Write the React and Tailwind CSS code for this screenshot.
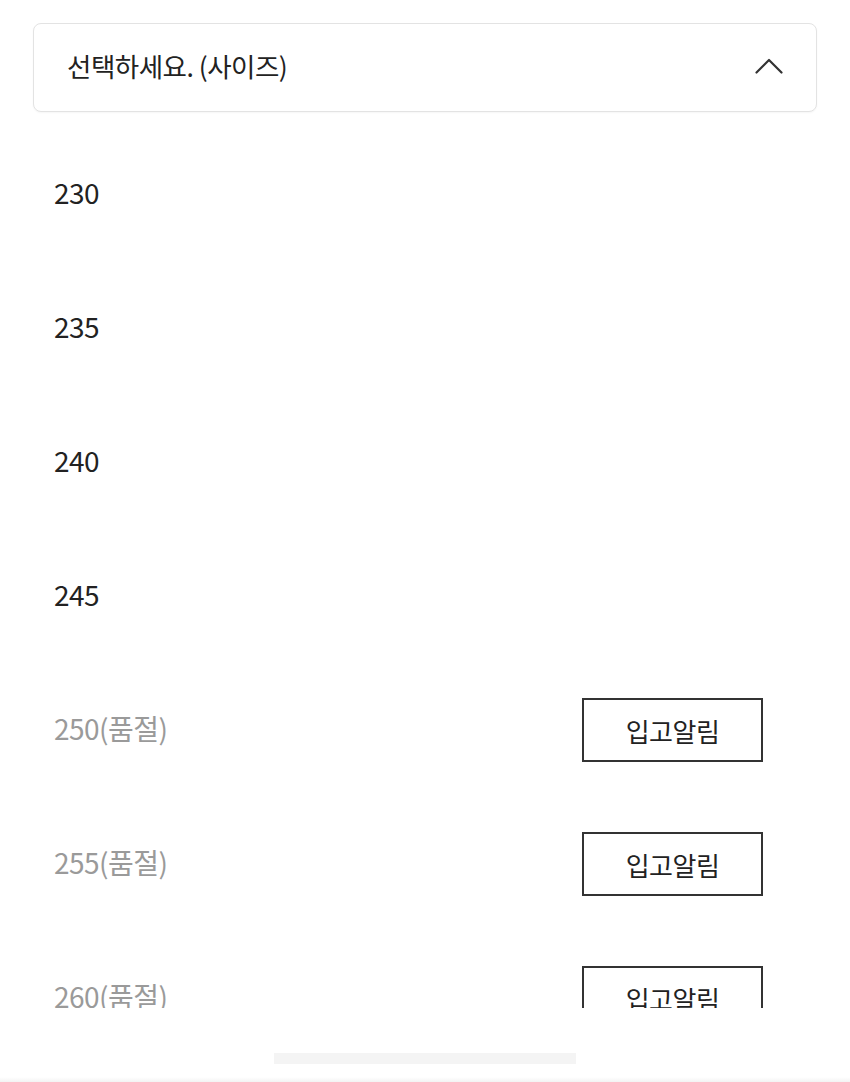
import { useState } from 'react';

const sizes = [
  { size: '230', soldOut: false },
  { size: '235', soldOut: false },
  { size: '240', soldOut: false },
  { size: '245', soldOut: false },
  { size: '250', soldOut: true },
  { size: '255', soldOut: true },
  { size: '260', soldOut: true },
];

function ChevronUp() {
  return (
    <svg width="28" height="16" viewBox="0 0 28 16" fill="none" className="text-[#333]">
      <path d="M1.5 14.5 L14 2 L26.5 14.5" stroke="currentColor" strokeWidth="2.2" strokeLinecap="round" strokeLinejoin="round" />
    </svg>
  );
}

export default function App() {
  const [open, setOpen] = useState(true);

  return (
    <div
      className="w-[850px] h-[1082px] bg-white flex flex-col overflow-hidden"
      style={{ fontFamily: '"Noto Sans CJK KR", "Noto Sans", sans-serif' }}
    >
      {/* Size select */}
      <div className="pt-[23px] px-[33px]">
        <button
          onClick={() => setOpen(!open)}
          className="w-full h-[89px] flex items-center justify-between pl-[33px] pr-[33px] pb-[3px] border border-[#e3e3e3] rounded-[8px] bg-white shadow-[0_1px_2px_rgba(0,0,0,0.04)]"
        >
          <span className="text-[26.5px] text-[#222] tracking-[-0.5px]">선택하세요. (사이즈)</span>
          <ChevronUp />
        </button>
      </div>

      {/* Option list */}
      <div className="h-[896px] overflow-hidden pt-[13px] pl-[54px] pr-[87px]">
        {sizes.map(s => (
          <div key={s.size} className="h-[134px] flex items-center justify-between">
            <span className={`text-[28px] tracking-[-0.5px] ${s.soldOut ? 'text-[#9a9a9a]' : 'text-[#222]'}`}>
              {s.soldOut ? `${s.size}(품절)` : s.size}
            </span>
            {s.soldOut && (
              <button className="w-[181px] h-[64px] mt-[4px] border-2 border-[#333] bg-white text-[26px] text-[#222] tracking-[-0.5px]">
                입고알림
              </button>
            )}
          </div>
        ))}
      </div>

      {/* Bottom sheet handle area */}
      <div className="flex-1 flex flex-col">
        <div className="pt-[45px] flex justify-center">
          <div className="w-[302px] h-[11px] bg-[#f4f4f4]" />
        </div>
        <div className="mt-auto h-[5px] bg-gradient-to-b from-white to-[#f3f3f3]" />
      </div>
    </div>
  );
}
